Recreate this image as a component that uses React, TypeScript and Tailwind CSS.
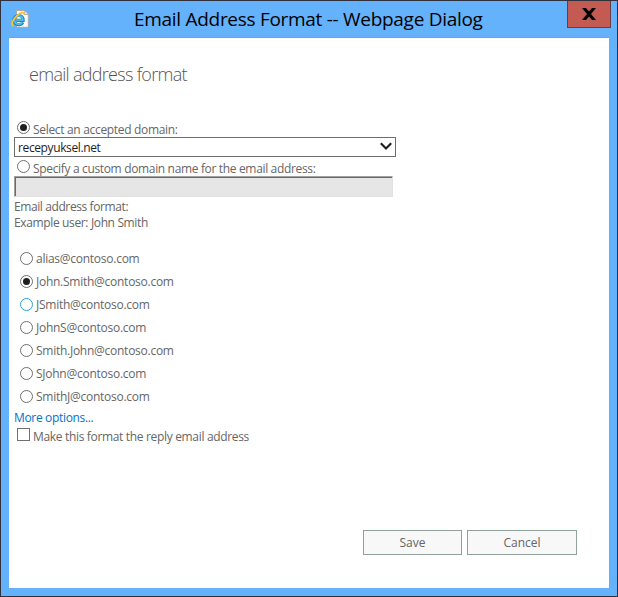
import React, { useState } from 'react';
import { clsx } from 'clsx';

interface RadioProps {
  name: string;
  checked: boolean;
  highlighted?: boolean;
  label: string;
  onSelect: () => void;
}

const Radio: React.FC<RadioProps> = ({ name, checked, highlighted, label, onSelect }) => (
  <span className="relative block w-[13px] h-[13px] shrink-0">
    <input
      type="radio"
      name={name}
      aria-label={label}
      checked={checked}
      onChange={onSelect}
      className={clsx(
        'block appearance-none w-[13px] h-[13px] rounded-full border bg-white outline-none',
        highlighted ? 'border-[#27a3dd]' : 'border-[#707070]'
      )}
    />
    {checked && (
      <span className="absolute left-[3px] top-[3px] w-[7px] h-[7px] rounded-full bg-[#1f1f1f] pointer-events-none" />
    )}
  </span>
);

const PageIcon: React.FC = () => (
  <svg width="18" height="18" viewBox="0 0 18 18" className="block">
    <path d="M5.5 .5h8l3.8 4v12.8H5.5z" fill="#fafafa" stroke="#a79d98" strokeWidth=".8" />
    <path d="M13.3.5v4h4" fill="#e4e2e0" stroke="#a79d98" strokeWidth=".8" />
    <path
      d="M11.8 12.2c-.8 1.5-2.4 2.4-4.1 2.4-2.8 0-4.7-1.9-4.7-4.5s2.1-4.6 4.8-4.6 4.3 2 4.3 4.9H5.5"
      fill="none"
      stroke="#2184b5"
      strokeWidth="3.2"
    />
    <path
      d="M11.4 12.3c-.7 1.2-2.1 2-3.7 2-2.5 0-4.3-1.8-4.3-4.2s1.9-4.2 4.4-4.2c2.4 0 3.9 1.7 3.9 4.2H5.5"
      fill="none"
      stroke="#50bce4"
      strokeWidth="1.9"
    />
    <path
      d="M2.4 16C-.8 14.5 2.3 9 6.3 5.4 9.3 2.6 13.2 1.3 12.7 4.5"
      fill="none"
      stroke="#f4c52c"
      strokeWidth="1.8"
    />
  </svg>
);

const formats = [
  'alias@contoso.com',
  'John.Smith@contoso.com',
  'JSmith@contoso.com',
  'JohnS@contoso.com',
  'Smith.John@contoso.com',
  'SJohn@contoso.com',
  'SmithJ@contoso.com',
];

const App: React.FC = () => {
  const [source, setSource] = useState('accepted');
  const [format, setFormat] = useState('John.Smith@contoso.com');
  const [reply, setReply] = useState(false);

  return (
    <div className="w-[618px] h-[597px] flex flex-col overflow-hidden border border-[#30313b] bg-[#64b1fc] px-2 pb-2 font-['Open_Sans','Noto_Sans',sans-serif] text-[12px] leading-4 text-[#666666]">
      <header className="flex h-[36px] shrink-0 items-start">
        <div className="w-[125px] pl-[2px] pt-[9px]">
          <PageIcon />
        </div>
        <h1 className="w-[353px] pt-[6px] text-[19px] leading-6 whitespace-nowrap tracking-[-0.29px] text-black">
          Email Address Format -- Webpage Dialog
        </h1>
        <button
          aria-label="Close"
          className="ml-auto -mr-[2px] flex h-[27px] w-[44px] items-center justify-center border border-t-0 border-[#693d48] bg-[#c35b52]"
        >
          <svg width="14" height="12" viewBox="0 0 14 12">
            <path d="M0 0h4l3 3.5L10 0h4L9 6l5 6h-4L7 8.5 4 12H0l5-6z" fill="#000" />
          </svg>
        </button>
      </header>

      <main className="flex h-[551px] shrink-0 flex-col border-t border-[#7c9fc8] bg-white pl-[5px]">
        <h2 className="mt-[24px] h-6 pl-[15px] text-[18px] leading-6 font-light tracking-[-0.7px] whitespace-nowrap text-[#555555]">
          email address format
        </h2>

        <div className="mt-[35px] flex h-[16px] items-start gap-[3px] pl-[3px]">
          <Radio
            name="source"
            label="Accepted domain"
            checked={source === 'accepted'}
            onSelect={() => setSource('accepted')}
          />
          <span className="pt-px tracking-[-0.32px] whitespace-nowrap">Select an accepted domain:</span>
        </div>

        <div className="flex h-5 w-[382px] items-center justify-between border border-[#6d6d6d] bg-white pl-[3px] pr-[3px] text-[#1e1e1e]">
          <span className="pt-px text-[12px] tracking-[-0.38px]">recepyuksel.net</span>
          <svg width="12" height="9" viewBox="0 0 12 9" className="mb-[2px]">
            <path d="M.8 1.2 6 6.5l5.2-5.3" fill="none" stroke="#1e1e1e" strokeWidth="2.1" />
          </svg>
        </div>

        <div className="mt-[3px] flex h-4 items-start gap-[3px] pl-[3px]">
          <Radio
            name="source"
            label="Custom domain"
            checked={source === 'custom'}
            onSelect={() => setSource('custom')}
          />
          <span className="pt-px tracking-[-0.34px] whitespace-nowrap">
            Specify a custom domain name for the email address:
          </span>
        </div>
        <input
          disabled
          className="block h-[21px] w-[379px] border border-t-[#a0a0a0] border-l-[#a0a0a0] border-r-[#e1e1e1] border-b-[#e1e1e1] bg-[#e6e6e6] shadow-[inset_1px_1px_0_#696969]"
        />
        <p className="mt-[2px] tracking-[-0.4px]">Email address format:</p>
        <p className="tracking-[-0.36px]">Example user: John Smith</p>

        <ul className="mt-4">
          {formats.map((item) => (
            <li key={item} className="flex h-[23px] items-center gap-[3px] pl-[6px]">
              <Radio
                name="format"
                label={item}
                checked={format === item}
                highlighted={item === 'JSmith@contoso.com'}
                onSelect={() => setFormat(item)}
              />
              <span className="tracking-[-0.26px]">{item}</span>
            </li>
          ))}
        </ul>

        <a href="#" className="mt-[2px] self-start tracking-[-0.33px] text-[#0072c6]">
          More options...
        </a>
        <div className="mt-[2px] flex h-4 items-start gap-[3px] pl-[3px]">
          <input
            type="checkbox"
            aria-label="Reply address"
            checked={reply}
            onChange={() => setReply(!reply)}
            className="appearance-none block h-[13px] w-[13px] border border-[#707070] bg-white checked:bg-[#1f1f1f]"
          />
          <span className="pt-[1px] tracking-[-0.33px] whitespace-nowrap">
            Make this format the reply email address
          </span>
        </div>

        <footer className="mt-auto mb-[33px] mr-[32px] flex justify-end gap-[5px]">
          <button className="h-[25px] w-[99px] border border-[#91a29c] bg-[#f8f8f8]">Save</button>
          <button className="h-[25px] w-[110px] border border-[#91a29c] bg-[#f8f8f8]">Cancel</button>
        </footer>
      </main>
    </div>
  );
};

export default App;
